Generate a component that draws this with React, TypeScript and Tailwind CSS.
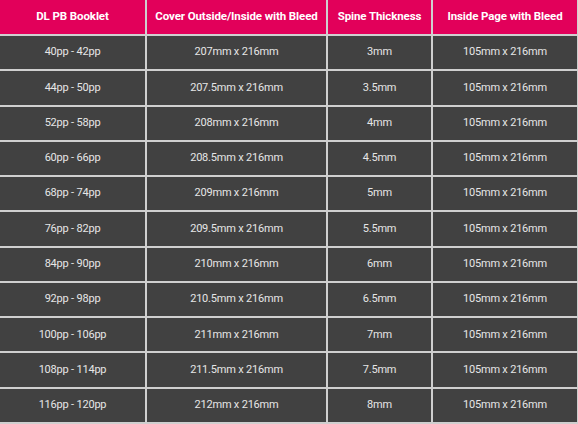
import React from "react";

const rows: [string, string, string, string][] = [
  ["40pp - 42pp", "207mm x 216mm", "3mm", "105mm x 216mm"],
  ["44pp - 50pp", "207.5mm x 216mm", "3.5mm", "105mm x 216mm"],
  ["52pp - 58pp", "208mm x 216mm", "4mm", "105mm x 216mm"],
  ["60pp - 66pp", "208.5mm x 216mm", "4.5mm", "105mm x 216mm"],
  ["68pp - 74pp", "209mm x 216mm", "5mm", "105mm x 216mm"],
  ["76pp - 82pp", "209.5mm x 216mm", "5.5mm", "105mm x 216mm"],
  ["84pp - 90pp", "210mm x 216mm", "6mm", "105mm x 216mm"],
  ["92pp - 98pp", "210.5mm x 216mm", "6.5mm", "105mm x 216mm"],
  ["100pp - 106pp", "211mm x 216mm", "7mm", "105mm x 216mm"],
  ["108pp - 114pp", "211.5mm x 216mm", "7.5mm", "105mm x 216mm"],
  ["116pp - 120pp", "212mm x 216mm", "8mm", "105mm x 216mm"],
];

const headers = [
  "DL PB Booklet",
  "Cover Outside/Inside with Bleed",
  "Spine Thickness",
  "Inside Page with Bleed",
];

export default function App() {
  return (
    <div
      className="w-[578px] h-[424px] bg-[#cfcfcf] pr-[1px] pb-[2px] grid grid-cols-[145px_179px_103px_144px] grid-rows-[34px_repeat(11,1fr)] gap-[2px]"
      style={{ fontFamily: "Roboto, 'Open Sans', sans-serif" }}
    >
      {headers.map((h) => (
        <div
          key={h}
          className="bg-[#e2005a] text-white font-bold text-[11.5px] tracking-[-0.1px] flex items-center justify-center"
        >
          {h}
        </div>
      ))}
      {rows.map((r) =>
        r.map((c, i) => (
          <div
            key={r[0] + i}
            className="bg-[#414141] text-[#e6e6e6] text-[11px] tracking-[-0.2px] flex items-center justify-center"
          >
            {c}
          </div>
        ))
      )}
    </div>
  );
}
